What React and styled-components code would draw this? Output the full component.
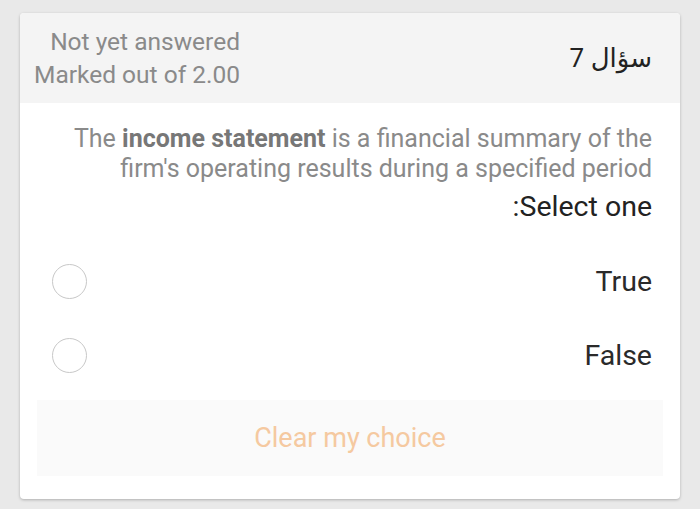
import styled, { createGlobalStyle } from "styled-components";

const Global = createGlobalStyle`
  html, body {
    margin: 0;
    background: #e9e9e9;
    font-family: Roboto, "Noto Sans", "DejaVu Sans", sans-serif;
  }
`;

const Page = styled.div`
  padding: 13px 20px 11px;
  direction: rtl;
`;

const Card = styled.section`
  background: #ffffff;
  border-radius: 4px;
  box-shadow: 0 1px 3px rgba(0, 0, 0, 0.25);
  overflow: hidden;
`;

const Header = styled.header`
  display: flex;
  justify-content: space-between;
  align-items: center;
  height: 90px;
  padding: 0 28px 0 14px;
  background: #f4f4f4;
`;

const Numero = styled.h3`
  margin: 0;
  font-size: 26px;
  font-weight: 400;
  color: #222;
`;

const Info = styled.div`
  direction: ltr;
  text-align: right;
  color: #8a8a8a;
  font-size: 24.5px;
  line-height: 33px;
`;

const Corpo = styled.div`
  padding: 21px 17px 23px 17px;
`;

const Enunciado = styled.p`
  margin: 0;
  font-size: 25px;
  line-height: 30px;
  color: #8a8a8a;
  text-align: right;
  padding: 0 11px 0 30px;

  strong {
    color: #777;
    font-weight: 700;
  }
`;

const Prompt = styled.p`
  margin: 6px 11px 0 0;
  font-size: 28.5px;
  line-height: 34px;
  color: #222;
`;

const Opcoes = styled.div`
  display: flex;
  flex-direction: column;
  margin-top: 20px;
`;

const Opcao = styled.label`
  display: flex;
  justify-content: space-between;
  align-items: center;
  height: 74px;
  padding-right: 11px;
  font-size: 28.5px;
  color: #2a2a2a;
`;

const Radio = styled.span`
  width: 33px;
  height: 33px;
  border-radius: 50%;
  border: 1.5px solid #c8c8c8;
  margin-left: 15px;
`;

const Limpar = styled.button`
  display: block;
  width: 100%;
  height: 76px;
  margin-top: 8px;
  background: #fafafa;
  border: none;
  font-family: inherit;
  font-size: 27px;
  color: #f5c9a0;
`;

export default function App() {
  return (
    <>
      <Global />
      <Page>
        <Card>
          <Header>
            <Numero>سؤال 7</Numero>
            <Info>
              Not yet answered
              <br />
              Marked out of 2.00
            </Info>
          </Header>
          <Corpo>
            <Enunciado dir="ltr">
              The <strong>income statement</strong> is a financial summary of
              the firm's operating results during a specified period
            </Enunciado>
            <Prompt>Select one:</Prompt>
            <Opcoes>
              <Opcao>
                True
                <Radio />
              </Opcao>
              <Opcao>
                False
                <Radio />
              </Opcao>
            </Opcoes>
            <Limpar>Clear my choice</Limpar>
          </Corpo>
        </Card>
      </Page>
    </>
  );
}
